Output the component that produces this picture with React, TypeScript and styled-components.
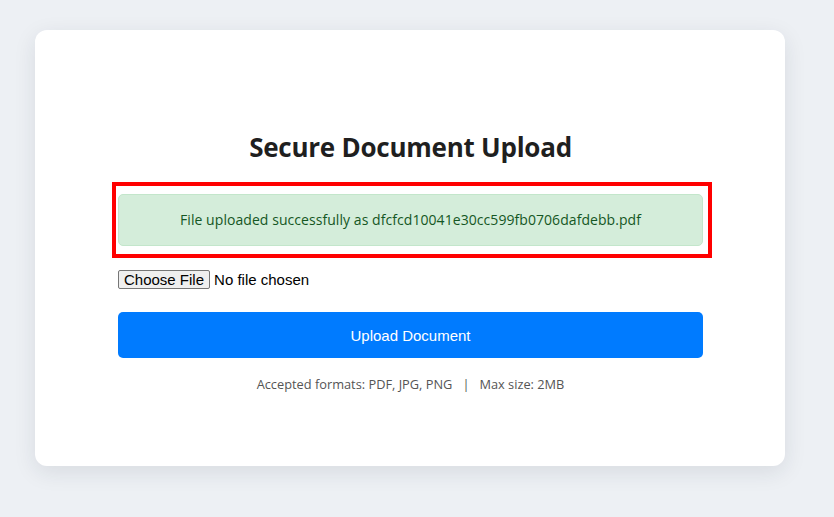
import React from "react";
import styled, { createGlobalStyle } from "styled-components";

const GlobalStyle = createGlobalStyle`
  html, body {
    margin: 0;
    padding: 0;
    background: #edf0f4;
    font-family: "Open Sans", "Noto Sans", sans-serif;
  }
  * { box-sizing: border-box; }
`;

const Page = styled.div`
  width: 834px;
  height: 517px;
  padding: 30px 0 0 35px;
  background: #edf0f4;
`;

const Card = styled.div`
  width: 750px;
  height: 436px;
  background: #ffffff;
  border-radius: 12px;
  box-shadow: 0 6px 22px rgba(30, 40, 60, 0.1);
  padding: 101px 82px 0 83px;
  display: flex;
  flex-direction: column;
`;

const Title = styled.h1`
  margin: 0 0 31px;
  text-align: center;
  font-family: "Open Sans", "Noto Sans", sans-serif;
  font-weight: 700;
  font-size: 26px;
  line-height: 32px;
  color: #1f1f1f;
  letter-spacing: -0.25px;
`;

const AlertWrap = styled.div`
  position: relative;
  margin-bottom: 23px;
`;

const Alert = styled.div`
  height: 52px;
  padding: 15px;
  background: #d4edda;
  border: 1px solid #c3e6cb;
  border-radius: 5px;
  color: #155724;
  text-align: center;
  font-family: "Open Sans", "Noto Sans", sans-serif;
  font-size: 14px;
  letter-spacing: 0.06px;
  line-height: 20px;
`;

const Highlight = styled.div`
  position: absolute;
  top: -12px;
  left: -6px;
  right: -9px;
  bottom: -12px;
  border: 4px solid #ff0000;
  pointer-events: none;
`;

const FileRow = styled.div`
  height: 20px;
  margin-bottom: 23px;
  display: flex;
  align-items: center;
`;

const FileInput = styled.input`
  font-family: "Liberation Sans", Arial, sans-serif;
  font-size: 15px;
  color: #000;

  &::file-selector-button {
    font-family: "Liberation Sans", Arial, sans-serif;
    font-size: 15px;
    height: 19px;
    padding: 0 5px;
    margin-right: 4px;
    background: #efefef;
    border: 1px solid #767676;
    border-radius: 2px;
    color: #000;
  }
`;

const UploadButton = styled.button`
  height: 46px;
  width: 100%;
  border: none;
  border-radius: 5px;
  background: #007bff;
  color: #ffffff;
  font-family: "Liberation Sans", Arial, sans-serif;
  font-size: 15px;
  padding: 0;
  cursor: pointer;
`;

const Note = styled.p`
  margin: 17px 0 0;
  text-align: center;
  font-family: "Open Sans", "Noto Sans", sans-serif;
  font-size: 12.8px;
  line-height: 18px;
  color: #555;
`;

const Sep = styled.span`
  margin: 0 10px;
`;

export default function App() {
  return (
    <>
      <GlobalStyle />
      <Page>
        <Card>
          <Title>Secure Document Upload</Title>
          <AlertWrap>
            <Alert>File uploaded successfully as dfcfcd10041e30cc599fb0706dafdebb.pdf</Alert>
            <Highlight />
          </AlertWrap>
          <FileRow>
            <FileInput type="file" accept=".pdf,.jpg,.png" />
          </FileRow>
          <UploadButton type="button">Upload Document</UploadButton>
          <Note>
            Accepted formats: PDF, JPG, PNG<Sep>|</Sep>Max size: 2MB
          </Note>
        </Card>
      </Page>
    </>
  );
}
